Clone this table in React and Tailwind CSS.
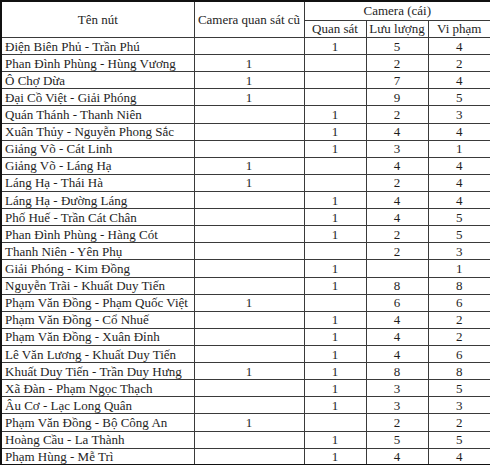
const rows = [
  ['Điện Biên Phủ - Trần Phú', '', '1', '5', '4'],
  ['Phan Đình Phùng - Hùng Vương', '1', '', '2', '2'],
  ['Ô Chợ Dừa', '1', '', '7', '4'],
  ['Đại Cồ Việt - Giải Phóng', '1', '', '9', '5'],
  ['Quán Thánh - Thanh Niên', '', '1', '2', '3'],
  ['Xuân Thủy - Nguyễn Phong Sắc', '', '1', '4', '4'],
  ['Giảng Võ - Cát Linh', '', '1', '3', '1'],
  ['Giảng Võ - Láng Hạ', '1', '', '4', '4'],
  ['Láng Hạ - Thái Hà', '1', '', '2', '4'],
  ['Láng Hạ - Đường Láng', '', '1', '4', '4'],
  ['Phố Huế - Trần Cát Chân', '', '1', '4', '5'],
  ['Phan Đình Phùng - Hàng Cót', '', '1', '2', '5'],
  ['Thanh Niên - Yên Phụ', '', '', '2', '3'],
  ['Giải Phóng - Kim Đồng', '', '1', '', '1'],
  ['Nguyễn Trãi - Khuất Duy Tiến', '', '1', '8', '8'],
  ['Phạm Văn Đồng - Phạm Quốc Việt', '1', '', '6', '6'],
  ['Phạm Văn Đồng - Cổ Nhuế', '', '1', '4', '2'],
  ['Phạm Văn Đồng - Xuân Đỉnh', '', '1', '4', '2'],
  ['Lê Văn Lương - Khuất Duy Tiến', '', '1', '4', '6'],
  ['Khuất Duy Tiến - Trần Duy Hưng', '1', '1', '8', '8'],
  ['Xã Đàn - Phạm Ngọc Thạch', '', '1', '3', '5'],
  ['Âu Cơ - Lạc Long Quân', '', '1', '3', '3'],
  ['Phạm Văn Đồng - Bộ Công An', '1', '', '2', '2'],
  ['Hoàng Cầu - La Thành', '', '1', '5', '5'],
  ['Phạm Hùng - Mễ Trì', '', '1', '4', '4'],
]

const cell = 'border border-[#3a3a3a] p-0 leading-none'

export default function App() {
  return (
    <div className="w-[490px] h-[465px] bg-white overflow-hidden font-['Liberation_Serif',serif] text-[13px] text-[#1e1e1e]">
      <table className="border-collapse table-fixed w-[490px] border-2 border-[#111]">
        <colgroup>
          <col className="w-[193px]" />
          <col className="w-[110px]" />
          <col className="w-[62px]" />
          <col className="w-[62px]" />
          <col className="w-[63px]" />
        </colgroup>
        <thead>
          <tr className="h-[19px]">
            <th rowSpan={2} className={`${cell} font-normal text-center`}>Tên nút</th>
            <th rowSpan={2} className={`${cell} font-normal text-center`}>Camera quan sát cũ</th>
            <th colSpan={3} className={`${cell} font-normal text-center`}>Camera (cái)</th>
          </tr>
          <tr className="h-[17.5px]">
            <th className={`${cell} font-normal text-center`}>Quan sát</th>
            <th className={`${cell} font-normal text-center`}>Lưu lượng</th>
            <th className={`${cell} font-normal text-center`}>Vi phạm</th>
          </tr>
        </thead>
        <tbody>
          {rows.map((r) => (
            <tr key={r[0]} className="h-[17.12px]">
              <td className={`${cell} pl-[3px] text-left whitespace-nowrap`}>{r[0]}</td>
              <td className={`${cell} text-center`}>{r[1]}</td>
              <td className={`${cell} text-center`}>{r[2]}</td>
              <td className={`${cell} text-center`}>{r[3]}</td>
              <td className={`${cell} text-center`}>{r[4]}</td>
            </tr>
          ))}
        </tbody>
      </table>
    </div>
  )
}
